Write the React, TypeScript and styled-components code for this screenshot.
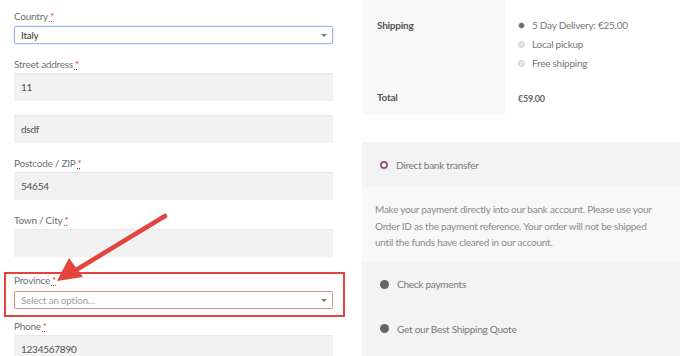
import styled, { createGlobalStyle } from "styled-components";

const GlobalStyle = createGlobalStyle`
  html, body {
    margin: 0;
    padding: 0;
    background: #ffffff;
  }
  body {
    font-family: "Lato", "Liberation Sans", sans-serif;
    font-size: 10px;
    letter-spacing: -0.25px;
    color: #6d6d6d;
  }
`

const Page = styled.div`
  position: relative;
  display: flex;
  width: 692px;
  height: 356px;
  overflow: hidden;
`

const FormColumn = styled.div`
  width: 319px;
  padding: 10px 0 0 14px;
  display: flex;
  flex-direction: column;
`

const Field = styled.div<{ $highlight?: boolean }>`
  position: relative;
  display: flex;
  flex-direction: column;
  margin-bottom: ${p => (p.$highlight ? "11px" : "14px")};
  margin-top: ${p => (p.$highlight ? "3px" : "0")};

  &::before {
    content: "";
    display: ${p => (p.$highlight ? "block" : "none")};
    position: absolute;
    left: -10px;
    right: -12px;
    top: -2px;
    bottom: -8px;
    border: 2px solid #e8403a;
    pointer-events: none;
  }
`

const Label = styled.label<{ $gap?: number }>`
  line-height: 12px;
  margin-bottom: ${p => p.$gap ?? 3}px;
  color: #707070;
`

const Req = styled.span`
  color: #e2401c;
  margin-left: 2px;
  text-decoration: underline dotted;
`

const Input = styled.div<{ $spaced?: boolean }>`
  height: 28px;
  flex-shrink: 0;
  background: #f2f2f2;
  box-shadow: inset 0 1px 1px rgba(0, 0, 0, 0.05);
  display: flex;
  align-items: center;
  padding-left: 7px;
  color: #505050;
  margin-top: ${p => (p.$spaced ? "14px" : "0")};
`

const Select = styled.div<{ $tone: "focus" | "error" }>`
  height: 16px;
  border: 1px solid ${p => (p.$tone === "focus" ? "#9cb8ea" : "#e58a80")};
  border-radius: 2px;
  box-shadow: ${p => (p.$tone === "focus" ? "0 0 2px rgba(90,140,230,0.4)" : "none")};
  display: flex;
  align-items: center;
  padding: 0 5px 0 6px;
  color: ${p => (p.$tone === "focus" ? "#333" : "#a0a0a0")};

  &::after {
    content: "";
    margin-left: auto;
    border-left: 3px solid transparent;
    border-right: 3px solid transparent;
    border-top: 3px solid #777;
  }
`

const SideColumn = styled.div`
  margin-left: 29px;
  width: 318px;
  display: flex;
  flex-direction: column;
`

const Totals = styled.div`
  display: grid;
  grid-template-columns: 143px 1fr;
`

const HeadCell = styled.div<{ $h: number; $pt: number }>`
  background: #f8f8f8;
  height: ${p => p.$h}px;
  padding: ${p => p.$pt}px 0 0 15px;
  box-sizing: border-box;
  font-weight: 700;
  color: #555;
`

const ValueCell = styled.div<{ $pt: number }>`
  padding: ${p => p.$pt}px 0 0 13px;
  box-sizing: border-box;
`

const RateList = styled.ul`
  list-style: none;
  margin: 0;
  padding: 0;
  display: flex;
  flex-direction: column;
  gap: 6px;
`

const Rate = styled.li`
  display: flex;
  align-items: center;
  gap: 7px;
  line-height: 13px;
  color: #777;
`

const SmallRadio = styled.span<{ $checked?: boolean }>`
  width: 5px;
  height: 5px;
  border-radius: 50%;
  background: ${p => (p.$checked ? "#666" : "#e4e4e4")};
  border: 1px solid ${p => (p.$checked ? "#ddd" : "#d0d0d0")};
`

const Amount = styled.span`
  font-weight: 700;
  color: #666;
  font-size: 9px;
`

const Payments = styled.div`
  margin-top: 27px;
  display: flex;
  flex-direction: column;
  background: #f3f3f3;
  flex: 1;
`

const Method = styled.div<{ $h: number }>`
  height: ${p => p.$h}px;
  display: flex;
  align-items: center;
  gap: 8px;
  padding-left: 18px;
  color: #777;
`

const Dot = styled.span<{ $active?: boolean }>`
  width: ${p => (p.$active ? "4px" : "9px")};
  height: ${p => (p.$active ? "4px" : "9px")};
  border-radius: 50%;
  background: ${p => (p.$active ? "#fff" : "#666")};
  border: ${p => (p.$active ? "2.5px solid #96588a" : "none")};
`

const Description = styled.div`
  background: #f8f8f8;
  height: 75px;
  box-sizing: border-box;
  padding: 14px 24px 0 13px;
  line-height: 16.5px;
  color: #8a8a8a;
`

const Arrow = styled.svg`
  position: absolute;
  left: 0;
  top: 0;
  pointer-events: none;
`

export default function App() {
  return (
    <Page>
      <GlobalStyle />
      <FormColumn>
        <Field>
          <Label $gap={4}>Country<Req>*</Req></Label>
          <Select $tone="focus">Italy</Select>
        </Field>
        <Field>
          <Label>Street address<Req>*</Req></Label>
          <Input>11</Input>
          <Input $spaced>dsdf</Input>
        </Field>
        <Field>
          <Label>Postcode / ZIP<Req>*</Req></Label>
          <Input>54654</Input>
        </Field>
        <Field>
          <Label>Town / City<Req>*</Req></Label>
          <Input />
        </Field>
        <Field $highlight>
          <Label $gap={5}>Province<Req>*</Req></Label>
          <Select $tone="error">Select an option…</Select>
        </Field>
        <Field>
          <Label>Phone<Req>*</Req></Label>
          <Input>1234567890</Input>
        </Field>
      </FormColumn>

      <SideColumn>
        <Totals>
          <HeadCell $h={80} $pt={19}>Shipping</HeadCell>
          <ValueCell $pt={19}>
            <RateList>
              <Rate><SmallRadio $checked />5 Day Delivery: €25.00</Rate>
              <Rate><SmallRadio />Local pickup</Rate>
              <Rate><SmallRadio />Free shipping</Rate>
            </RateList>
          </ValueCell>
          <HeadCell $h={35} $pt={11}>Total</HeadCell>
          <ValueCell $pt={12}><Amount>€59.00</Amount></ValueCell>
        </Totals>

        <Payments>
          <Method $h={45}><Dot $active />Direct bank transfer</Method>
          <Description>
            Make your payment directly into our bank account. Please use your
            Order ID as the payment reference. Your order will not be shipped
            until the funds have cleared in our account.
          </Description>
          <Method $h={44}><Dot />Check payments</Method>
          <Method $h={45}><Dot />Get our Best Shipping Quote</Method>
        </Payments>
      </SideColumn>

      <Arrow width="692" height="356" viewBox="0 0 692 356">
        <line x1="165" y1="216" x2="76" y2="270" stroke="#e3443c" strokeWidth="4.5" strokeLinecap="round" />
        <polygon points="57,281 69,258 83,277" fill="#e3443c" />
      </Arrow>
    </Page>
  );
}
